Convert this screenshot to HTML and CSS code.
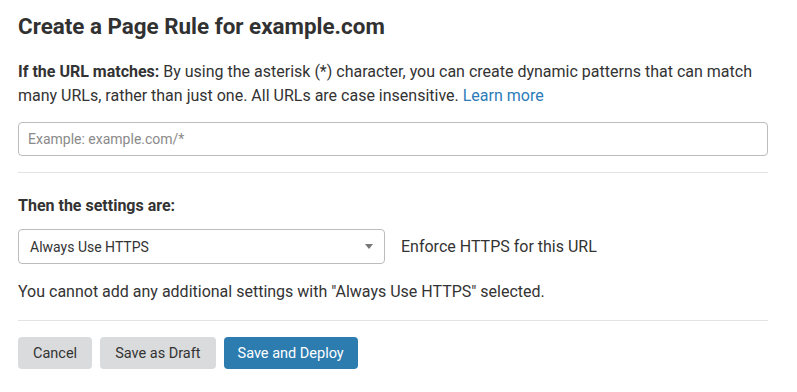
FILE: index.html
```html
<!DOCTYPE html>
<html lang="en">
<head>
  <meta charset="UTF-8">
  <meta name="viewport" content="width=device-width, initial-scale=1.0">
  <title>Create a Page Rule</title>
  <link rel="stylesheet" href="styles.css">
</head>
<body>
  <div class="page">
    <h1 class="title">Create a Page Rule for example.com</h1>
    <p class="intro">
      <b>If the URL matches:</b> By using the asterisk (*) character, you can create dynamic patterns that can match
      many URLs, rather than just one. All URLs are case insensitive. <a href="#" class="link">Learn more</a>
    </p>
    <div class="url-input">Example: example.com/*</div>
    <hr class="divider">
    <h2 class="subtitle">Then the settings are:</h2>
    <div class="setting-row">
      <div class="select">
        <span>Always Use HTTPS</span>
        <span class="caret"></span>
      </div>
      <span class="setting-desc">Enforce HTTPS for this URL</span>
    </div>
    <p class="note">You cannot add any additional settings with "Always Use HTTPS" selected.</p>
    <hr class="divider divider-bottom">
    <div class="actions">
      <button class="btn">Cancel</button>
      <button class="btn">Save as Draft</button>
      <button class="btn btn-primary">Save and Deploy</button>
    </div>
  </div>
</body>
</html>
```

FILE: styles.css
```css
* {
  margin: 0;
  padding: 0;
  box-sizing: border-box;
}
body {
  background: #fff;
  color: #333;
  font-family: Roboto, "Liberation Sans", sans-serif;
}
.page {
  padding: 12px 29px 0 18px;
}
.title {
  font-size: 22.4px;
  line-height: 28px;
  font-weight: 700;
  color: #313131;
}
.intro {
  margin-top: 20px;
  font-size: 16px;
  line-height: 24px;
}
.intro b {
  font-weight: 700;
}
.link {
  color: #2c7cb9;
  text-decoration: none;
}
.url-input {
  margin-top: 14px;
  height: 34px;
  border: 1px solid #bcbcbc;
  border-radius: 4px;
  padding: 0 9px;
  font-size: 14px;
  line-height: 32px;
  color: #8a8a8a;
}
.divider {
  border: 0;
  border-top: 1px solid #e3e3e3;
  margin-top: 16px;
}
.subtitle {
  margin-top: 21px;
  font-size: 16px;
  line-height: 24px;
  font-weight: 700;
}
.setting-row {
  display: flex;
  align-items: center;
  gap: 16px;
  margin-top: 11px;
}
.select {
  width: 367px;
  height: 35px;
  display: flex;
  align-items: center;
  justify-content: space-between;
  border: 1px solid #bcbcbc;
  border-radius: 4px;
  padding: 0 11px 0 11px;
  font-size: 14px;
  color: #333;
}
.caret {
  width: 0;
  height: 0;
  border-left: 4.5px solid transparent;
  border-right: 4.5px solid transparent;
  border-top: 5px solid #777;
}
.setting-desc {
  font-size: 16px;
}
.note {
  margin-top: 16px;
  font-size: 16px;
  line-height: 24px;
}
.divider-bottom {
  margin-top: 16px;
}
.actions {
  display: flex;
  gap: 8px;
  margin-top: 16px;
}
.btn {
  height: 32px;
  padding: 0 15px;
  border: 0;
  border-radius: 4px;
  background: #dadbdc;
  color: #333;
  font-family: Roboto, "Liberation Sans", sans-serif;
  font-size: 14.5px;
}
.btn-primary {
  padding: 0 14px;
  background: #2c7cb0;
  color: #fff;
}
```
